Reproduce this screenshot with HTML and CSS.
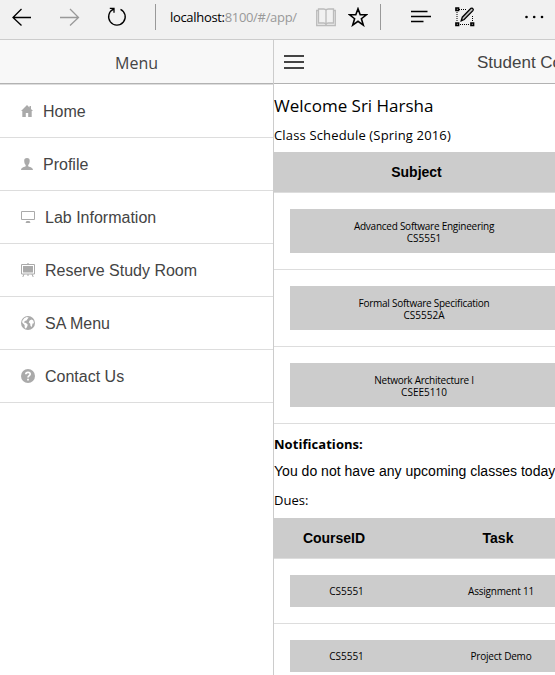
FILE: index.html
```html
<!DOCTYPE html>
<html lang="en">
<head>
<meta charset="utf-8">
<title>Student Console</title>
<link rel="stylesheet" href="styles.css">
</head>
<body>
<header class="browser">
  <svg class="back" width="20" height="18" viewBox="0 0 20 18"><path d="M1 9.5h18M9.5 1L1 9.5 9.5 17.5"/></svg>
  <svg class="forward" width="20" height="18" viewBox="0 0 20 18"><path d="M0 9.5h18.5M10 1l8.5 8.5-8.5 8"/></svg>
  <svg class="reload" width="20" height="20" viewBox="0 0 20 20"><path d="M13.5 2.3A8.3 8.3 0 1 1 6.6 2.2M2.8 1.3h4.2v4.4"/></svg>
  <i class="rule"></i>
  <span class="url">localhost:<span class="path">8100/#/app/</span></span>
  <svg class="book" width="20" height="19" viewBox="0 0 20 19"><path d="M.7 2.5h1.8V1h5.2Q9.7 1 10 2.3 10.3 1 12.3 1h5.2v1.5h1.8v15H.7zM2.5 2.5V15h5.2Q9.7 15 10 16.5 10.3 15 12.3 15h5.2V2.5M10 2.3v15"/></svg>
  <svg class="star" width="20" height="20" viewBox="0 0 20 20"><path d="M10 1.8l2.2 6h6.2l-5 3.9 1.9 6.4-5.3-3.8-5.3 3.8 1.9-6.4-5-3.9h6.2z"/></svg>
  <i class="rule second"></i>
  <svg class="hub" width="20" height="14" viewBox="0 0 20 14"><path d="M0 1.5h16.5M0 6.5h20M0 11.5h12.5"/></svg>
  <svg class="note" width="20" height="20" viewBox="0 0 20 20"><path class="dots" d="M4 2.5h8M2 5v10M5 17.5h10M17.5 9v6"/><path class="corner" d="M1 1h2.5v2.5H1zM1 16h2.5v2.5H1zM16 16h2.5v2.5H16z"/><path class="pen" d="M6.2 13.8l1.1-3.6L15.9 1.4q1.4-.6 2 .2.8.9 0 2L9.2 12.5z"/></svg>
  <svg class="more" width="20" height="4" viewBox="0 0 20 4"><circle cx="2.5" cy="2" r="1.3"/><circle cx="10.2" cy="2" r="1.3"/><circle cx="18" cy="2" r="1.3"/></svg>
</header>
<div class="app">
  <aside class="side">
    <h1 class="bar menu-title"><span>Menu</span></h1>
    <nav>
      <a class="item"><svg width="14" height="14" viewBox="0 0 14 14"><path d="M6 1L0 7h1.3v6h3.5V9h2.4v4h3.5V7H12l-2-2V2H8.5v1.5z"/></svg><span>Home</span></a>
      <a class="item"><svg width="14" height="14" viewBox="0 0 14 14"><path d="M6 1C4 1 3 2.2 3.2 4c.1 2 .6 3.2 1.5 4v1.3C4 10.3.2 10 0 13h12c-.2-3-4-2.7-4.8-3.7V8c.9-.8 1.4-2 1.5-4C8.9 2.2 8 1 6 1z"/></svg><span>Profile</span></a>
      <a class="item wide"><svg width="14" height="14" viewBox="0 0 14 14"><path class="line" d="M.5 1.5h13v8H.5z"/><path d="M5.5 11h3l1 2h-5z"/></svg><span>Lab Information</span></a>
      <a class="item wide"><svg width="14" height="14" viewBox="0 0 14 14"><path d="M6.4 0h1.2v1.5H6.4zM2 3h10v6.5H2z"/><path class="line" d="M.5 1.5h13v9.5H.5zM3 11l-1.2 3M11 11l1.2 3M7 11v2"/></svg><span>Reserve Study Room</span></a>
      <a class="item wide"><svg width="14" height="14" viewBox="0 0 14 14"><circle cx="7" cy="7" r="7"/><path class="hole" d="M3.2 2.2L5.7 1l2 .5L6.5 3l-1 1.5L3.8 5 3 6.5 5 7l1.8 1.8L6 11l-1.2 1.7L3.7 11.5 3.6 9 1.3 6.8 1.2 5zM8.8 4.2l2-.7 1.5 1 .7 2.8-1.4.2-.8 3.6-1.3-1-.3-2.4-1.5-1.4z"/></svg><span>SA Menu</span></a>
      <a class="item wide"><svg width="14" height="14" viewBox="0 0 14 14"><circle cx="7" cy="7" r="7"/><path class="question" d="M4.8 5.3C4.9 2.6 9.2 2.7 9.2 5.1 9.2 6.7 7 6.6 7 8.6M7 9.8v1.6"/></svg><span>Contact Us</span></a>
    </nav>
  </aside>
  <main class="content">
    <div class="bar top"><svg width="20" height="14" viewBox="0 0 20 14"><path d="M0 0h20v2H0zM0 6h20v2H0zM0 12h20v2H0z"/></svg><span>Student Console</span></div>
    <h2 class="welcome"><span>Welcome Sri Harsha</span></h2>
    <p class="schedule"><span>Class Schedule (Spring 2016)</span></p>
    <section class="subjects">
      <div class="thead"><b>Subject</b></div>
      <div class="row"><div class="cell"><span class="name">Advanced Software Engineering</span><span>CS5551</span></div></div>
      <div class="row"><div class="cell"><span class="name">Formal Software Specification</span><span>CS5552A</span></div></div>
      <div class="row"><div class="cell"><span class="name">Network Architecture I</span><span>CSEE5110</span></div></div>
    </section>
    <p class="notifications"><span>Notifications:</span></p>
    <p class="message"><span>You do not have any upcoming classes today</span></p>
    <p class="dues"><span>Dues:</span></p>
    <section class="tasks">
      <div class="thead"><b>CourseID</b><b>Task</b></div>
      <div class="row"><div class="cell"><span class="code">CS5551</span><span class="task">Assignment 11</span></div></div>
      <div class="row"><div class="cell"><span class="code">CS5551</span><span class="task">Project Demo</span></div></div>
    </section>
  </main>
</div>
</body>
</html>
```
FILE: styles.css
```css
* { box-sizing: border-box; }
body {
  margin: 0;
  width: 555px;
  height: 675px;
  overflow: hidden;
  background: #fff;
  color: #000;
  font-family: "Open Sans", "Noto Sans", sans-serif;
}
h1, h2, p { margin: 0; font-weight: 400; }
svg { display: block; flex: none; }
span { white-space: nowrap; }

.browser {
  display: flex;
  align-items: flex-start;
  height: 40px;
  padding-left: 12px;
  background: #f1f1f1;
  border-bottom: 1px solid #ccc;
}
.browser path { fill: none; stroke: #000; stroke-width: 1.3; }
.back, .forward { margin-top: 8px; }
.forward { margin-left: 28px; }
.browser .forward path { stroke: #999; }
.reload { margin: 7px 0 0 27px; }
.rule { width: 1px; height: 26px; margin: 4px 0 0 28px; background: #999; }
.url {
  width: 146px;
  margin-left: 14px;
  font-size: 13px;
  line-height: 35px;
  letter-spacing: -.32px;
}
.path { color: #999; }
.book { margin-top: 8px; }
.browser .book path { stroke: #bbb; }
.star { margin: 7px 0 0 12px; }
.browser .star path { stroke-width: 1.6; }
.rule.second { margin-left: 12px; }
.hub { margin: 10px 0 0 30px; }
.note { margin: 7px 0 0 24px; }
.browser .dots { stroke-dasharray: 1 1; stroke-width: 1; }
.browser .pen { fill: #bbb; }
.browser .corner { stroke-width: 1.7; }
.more { margin: 15px 0 0 49px; }

.app { display: flex; height: 635px; }
.side { width: 274px; flex: none; border-right: 1px solid #ccc; }
.bar { height: 44px; background: #f8f8f8; border-bottom: 1px solid #b2b2b2; color: #444; }
.menu-title { font-size: 16px; line-height: 46px; text-align: center; }
nav { border-top: 1px solid #ddd; }
.item {
  display: flex;
  align-items: center;
  height: 53px;
  padding-left: 21px;
  border-bottom: 1px solid #ddd;
  color: #444;
  font: 16px "Liberation Sans", Arial, sans-serif;
}
.item span { margin-left: 8px; padding-top: 1px; }
.item.wide span { margin-left: 10px; }
.item svg { fill: #aaa; }
.line { fill: none; stroke: #aaa; }
.hole { fill: #fff; }
.question { fill: none; stroke: #fff; stroke-width: 1.7; }

.content { width: 281px; flex: none; overflow: hidden; }
.top {
  display: flex;
  align-items: center;
  padding: 0 0 0 10px;
  font: 17px "Liberation Sans", Arial, sans-serif;
}
.top svg { fill: #444; }
.top span { margin: 2px 0 0 173px; }
.welcome { height: 41px; font-size: 17px; line-height: 44px; }
.schedule { height: 27px; font-size: 13px; line-height: 21px; letter-spacing: .16px; }
.thead {
  display: flex;
  height: 41px;
  background: #ccc;
  border-bottom: 1px solid #ddd;
  font: bold 14px/41px "Liberation Sans", Arial, sans-serif;
  text-align: center;
}
.thead b { flex: none; }
.subjects .thead b { width: 285px; }
.tasks .thead b:first-child { width: 120px; }
.tasks .thead b:last-child { width: 208px; }
.row { width: 284px; padding: 16px 0 16px 16px; border-bottom: 1px solid #ddd; }
.cell { display: flex; background: #ccc; font-size: 10px; line-height: 12px; }
.subjects .cell { flex-direction: column; align-items: center; height: 44px; padding-top: 11px; }
.name { letter-spacing: -.25px; }
.tasks .cell { height: 32px; line-height: 33px; text-align: center; }
.code { width: 113px; flex: none; }
.task { width: 196px; flex: none; letter-spacing: -.2px; }
.notifications { height: 34px; font-size: 13px; font-weight: 700; line-height: 41px; letter-spacing: .05px; }
.message { height: 27px; font: 14px/27px "Liberation Sans", Arial, sans-serif; letter-spacing: .02px; }
.dues { height: 33px; font-size: 13px; line-height: 31px; }
```
